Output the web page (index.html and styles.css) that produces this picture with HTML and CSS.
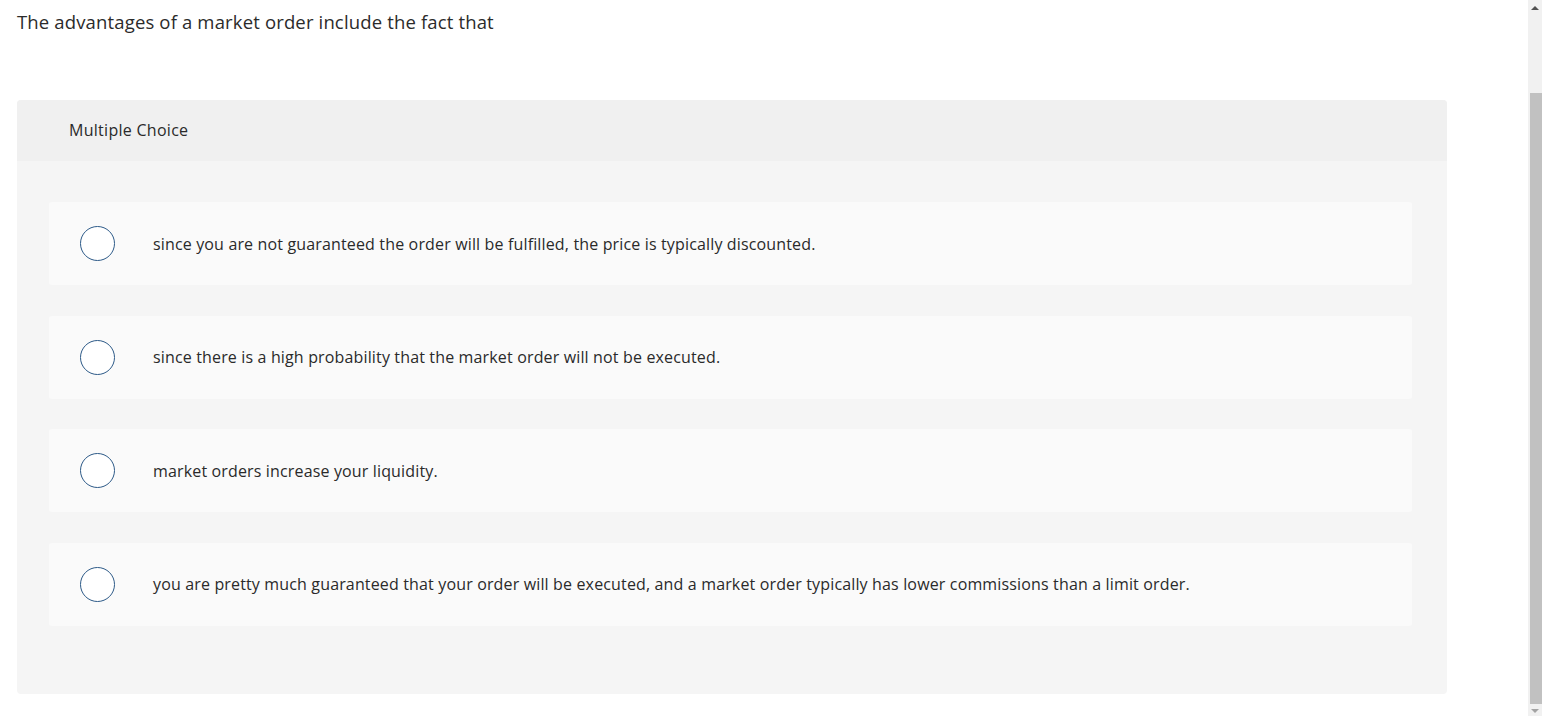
FILE: index.html
```html
<!DOCTYPE html>
<html>
<head>
<meta charset="utf-8">
<link rel="stylesheet" href="styles.css">
</head>
<body>
<div class="page">
  <p class="prompt">The advantages of a market order include the fact that</p>
  <section class="card">
    <header class="card-head">Multiple Choice</header>
    <div class="card-body">
      <label class="option"><span class="radio"></span><span class="opt-text">since you are not guaranteed the order will be fulfilled, the price is typically discounted.</span></label>
      <label class="option"><span class="radio"></span><span class="opt-text">since there is a high probability that the market order will not be executed.</span></label>
      <label class="option"><span class="radio"></span><span class="opt-text">market orders increase your liquidity.</span></label>
      <label class="option"><span class="radio"></span><span class="opt-text">you are pretty much guaranteed that your order will be executed, and a market order typically has lower commissions than a limit order.</span></label>
    </div>
  </section>
</div>
<div class="scrollbar">
  <span class="arrow up"></span>
  <span class="thumb"></span>
  <span class="arrow down"></span>
</div>
</body>
</html>
```
FILE: styles.css
```css
html, body {
  margin: 0;
  padding: 0;
  background: #ffffff;
  overflow: hidden;
}
body {
  font-family: "Open Sans", Lato, sans-serif;
  color: #2a2a2a;
}
.page {
  padding: 0 95px 0 17px;
}
.prompt {
  margin: 0;
  padding-top: 10px;
  font-size: 18.5px;
  letter-spacing: 0.15px;
  line-height: 24px;
  height: 90px;
  color: #2b2b2b;
}
.card {
  width: 1430px;
  border-radius: 4px;
  background: #f5f5f5;
  overflow: hidden;
}
.card-head {
  height: 61px;
  background: #f0f0f0;
  padding-left: 52px;
  display: flex;
  align-items: center;
  font-size: 16px;
  letter-spacing: 0.28px;
  color: #2a2a2a;
  padding-bottom: 1px;
  box-sizing: border-box;
}
.card-body {
  padding: 41px 35px 68px 32px;
  display: flex;
  flex-direction: column;
  gap: 30.5px;
}
.option {
  height: 83px;
  background: #fafafa;
  border-radius: 3px;
  display: flex;
  align-items: center;
  padding-left: 31px;
}
.radio {
  width: 33px;
  height: 33px;
  border: 1.2px solid #2d5a88;
  border-radius: 50%;
  background: #ffffff;
  flex: none;
}
.opt-text {
  margin-left: 38px;
  font-size: 16px;
  letter-spacing: 0.15px;
  color: #2a2a2a;
}
.scrollbar {
  position: fixed;
  top: 0;
  right: 0;
  width: 14px;
  height: 716px;
  background: #f1f1f1;
}
.thumb {
  position: absolute;
  left: 2px;
  right: 0;
  top: 93px;
  height: 611px;
  background: #c1c1c1;
}
.arrow {
  position: absolute;
  left: 3px;
  width: 0;
  height: 0;
  border-left: 4px solid transparent;
  border-right: 4px solid transparent;
}
.arrow.up {
  top: 6px;
  border-bottom: 4px solid #505050;
}
.arrow.down {
  bottom: 3px;
  border-top: 4px solid #a3a3a3;
}
```
